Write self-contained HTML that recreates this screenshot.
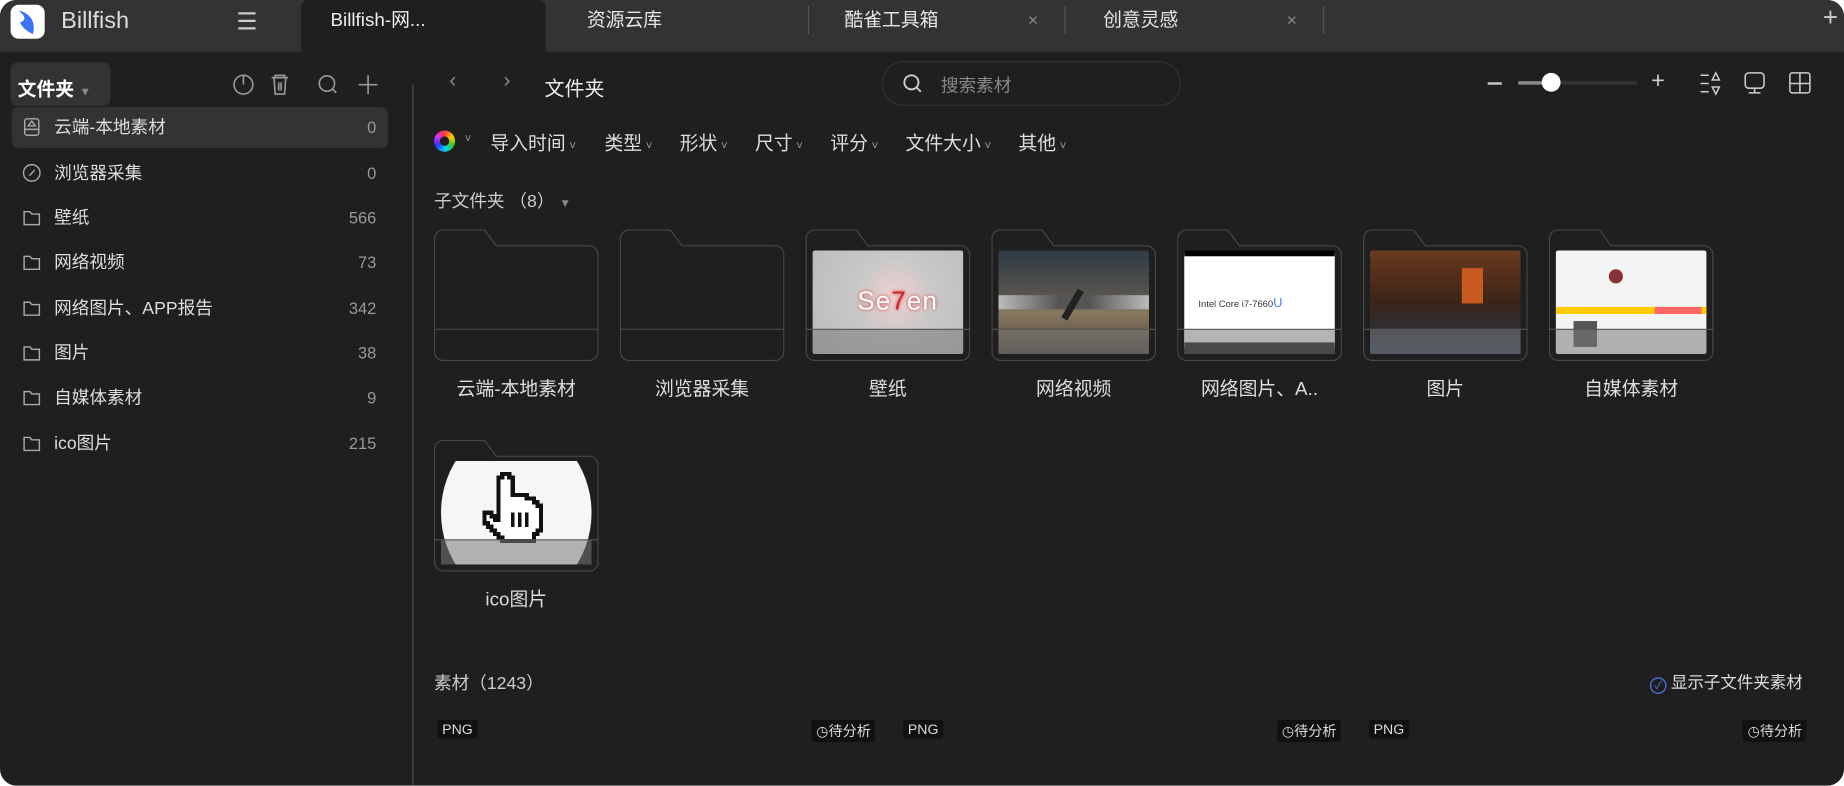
<!DOCTYPE html>
<html><head><meta charset="utf-8"><style>
html,body{margin:0;padding:0;background:#fff;overflow:hidden}
#w{position:absolute;left:0;top:0;width:1568px;height:668px;transform:scale(1.17602);transform-origin:0 0;font-family:"Liberation Sans","Noto Sans CJK SC",sans-serif;color:#ddd}
#win{position:absolute;left:0;top:0;width:1568px;height:668px;background:#1f1f1f;border-radius:14px;overflow:hidden}
#tb{position:absolute;left:0;top:0;width:1568px;height:44px;background:#333}
.a{position:absolute;white-space:nowrap}
.tab{position:absolute;top:0;height:44px;font-size:16px;line-height:36px;color:#e6e6e6}
.sep{position:absolute;top:5px;width:1px;height:24px;background:#555}
.x{position:absolute;top:9px;font-size:15px;color:#888}
.si{position:absolute;left:10px;width:320px;height:35px;font-size:15px;line-height:35px;color:#ddd}
.si .n{position:absolute;right:10px;color:#999;font-size:14px}
.si .t{position:absolute;left:36px}
.ic{position:absolute;left:9px;top:9px;width:16px;height:16px}
.f{position:absolute;width:140px;height:112px}
.f .img{position:absolute;left:6px;top:18px;width:128px;height:88px;overflow:hidden;border-radius:2px}
.f .sh{position:absolute;left:6px;top:85px;width:128px;height:21px;background:rgba(120,120,120,.55)}
.f svg{position:absolute;left:0;top:0}
.lb{position:absolute;width:158px;text-align:center;font-size:16px;color:#ddd}
.flt{position:absolute;top:108px;font-size:16px;color:#ddd}
.flt i{font-style:normal;font-size:10px;color:#999;margin-left:3px}
.tag{position:absolute;top:612px;background:#111;font-size:12px;color:#ddd;padding:1px 4px;border-radius:2px}
</style></head><body><div id="w"><div id="win">
<div id="tb"></div>
<div class="a" style="left:256px;top:0;width:208px;height:44px;background:#1f1f1f;border-radius:6px 6px 0 0"></div>
<div class="a" style="left:0;top:0;width:255px;height:44px;background:#333"></div>
<div class="a" style="left:9px;top:4px;width:29px;height:29px;background:#fff;border-radius:7px"><svg width="29" height="29" viewBox="0 0 29 29"><path d="M7 5 C16 7 22 14 19 25 C15 23 10 20 8 15 C12 14 13 11 10 8 Z" fill="#3a74f2"/></svg></div>
<div class="a" style="left:52px;top:7px;font-size:20px;color:#ddd">Billfish</div>
<div class="a" style="left:201px;top:6px;font-size:20px;color:#ccc">☰</div>
<div class="tab" style="left:281px;color:#eee">Billfish-网...</div>
<div class="tab" style="left:499px">资源云库</div>
<div class="sep" style="left:687px"></div>
<div class="tab" style="left:718px">酷雀工具箱</div><div class="x" style="left:874px">×</div>
<div class="sep" style="left:905px"></div>
<div class="tab" style="left:938px">创意灵感</div><div class="x" style="left:1094px">×</div>
<div class="sep" style="left:1125px"></div>
<div class="a" style="left:1550px;top:2px;font-size:22px;color:#ccc">+</div>

<!-- sidebar -->
<div class="a" style="left:9px;top:53px;width:85px;height:37px;background:#333;border-radius:6px"></div>
<div class="a" style="left:15px;top:62px;font-size:16px;font-weight:bold;color:#fff">文件夹 <span style="font-size:10px;color:#888">▼</span></div>
<svg class="a" style="left:196px;top:61px" width="130" height="22" viewBox="0 0 130 22" fill="none" stroke="#999" stroke-width="1.4"><circle cx="11" cy="11" r="8"/><path d="M11 3v8"/><path d="M35 5h14M38 5v-2h8v2M37 5l1 14h8l1-14M41 9v7M43 9v7"/><circle cx="82" cy="10" r="6.5"/><path d="M87 15l3 3"/><path d="M117 3v16M109 11h16"/></svg>
<div class="a" style="left:350px;top:72px;width:1.5px;height:596px;background:#3a3a3a"></div>
<div class="si" style="top:91px;background:#333;border-radius:6px"><svg class="ic" viewBox="0 0 16 16" fill="none" stroke="#aaa" stroke-width="1.2"><rect x="2" y="1" width="12" height="14" rx="2"/><path d="M2 10h12M5 7l3-4 3 4z"/></svg><span class="t">云端-本地素材</span><span class="n">0</span></div>
<div class="si" style="top:130px"><svg class="ic" viewBox="0 0 16 16" fill="none" stroke="#aaa" stroke-width="1.2"><circle cx="8" cy="8" r="7"/><path d="M10.5 5.5L6 10.5"/></svg><span class="t">浏览器采集</span><span class="n">0</span></div>
<div class="si" style="top:168px"><svg class="ic" viewBox="0 0 16 16" fill="none" stroke="#aaa" stroke-width="1.2"><path d="M1.5 3h5l1.5 2h6.5v9h-13z"/></svg><span class="t">壁纸</span><span class="n">566</span></div>
<div class="si" style="top:206px"><svg class="ic" viewBox="0 0 16 16" fill="none" stroke="#aaa" stroke-width="1.2"><path d="M1.5 3h5l1.5 2h6.5v9h-13z"/></svg><span class="t">网络视频</span><span class="n">73</span></div>
<div class="si" style="top:245px"><svg class="ic" viewBox="0 0 16 16" fill="none" stroke="#aaa" stroke-width="1.2"><path d="M1.5 3h5l1.5 2h6.5v9h-13z"/></svg><span class="t">网络图片、APP报告</span><span class="n">342</span></div>
<div class="si" style="top:283px"><svg class="ic" viewBox="0 0 16 16" fill="none" stroke="#aaa" stroke-width="1.2"><path d="M1.5 3h5l1.5 2h6.5v9h-13z"/></svg><span class="t">图片</span><span class="n">38</span></div>
<div class="si" style="top:321px"><svg class="ic" viewBox="0 0 16 16" fill="none" stroke="#aaa" stroke-width="1.2"><path d="M1.5 3h5l1.5 2h6.5v9h-13z"/></svg><span class="t">自媒体素材</span><span class="n">9</span></div>
<div class="si" style="top:360px"><svg class="ic" viewBox="0 0 16 16" fill="none" stroke="#aaa" stroke-width="1.2"><path d="M1.5 3h5l1.5 2h6.5v9h-13z"/></svg><span class="t">ico图片</span><span class="n">215</span></div>

<!-- header -->
<div class="a" style="left:382px;top:58px;font-size:18px;color:#888">‹</div>
<div class="a" style="left:428px;top:58px;font-size:18px;color:#888">›</div>
<div class="a" style="left:463px;top:61px;font-size:17px;color:#eee">文件夹</div>
<div class="a" style="left:750px;top:52px;width:252px;height:36px;border:1.5px solid #333;border-radius:18px;background:#1f1f1f"></div>
<svg class="a" style="left:767px;top:62px" width="18" height="18" fill="none" stroke="#ccc" stroke-width="1.6"><circle cx="8" cy="8" r="6"/><path d="M12.5 12.5l3.5 3.5"/></svg>
<div class="a" style="left:800px;top:62px;font-size:15px;color:#888">搜索素材</div>
<div class="a" style="left:1265px;top:70px;width:12px;height:2px;background:#ccc"></div>
<div class="a" style="left:1291px;top:69px;width:101px;height:3px;background:#333"></div>
<div class="a" style="left:1291px;top:69px;width:28px;height:3px;background:#888"></div>
<div class="a" style="left:1311px;top:62px;width:16px;height:16px;background:#fff;border-radius:8px"></div>
<div class="a" style="left:1404px;top:58px;font-size:20px;color:#ccc">+</div>
<svg class="a" style="left:1445px;top:60px" width="100" height="22" fill="none" stroke="#ccc" stroke-width="1.3"><path d="M1 4h7M1 11h7M1 18h7M14 2l-3 6h6zM14 20l-3-6h6z"/><rect x="39" y="2" width="16" height="13" rx="3"/><path d="M47 15v4M42 19h10"/><rect x="77" y="2" width="17" height="17" rx="2"/><path d="M85.5 2v17M77 11h17"/></svg>

<!-- filters -->
<div class="a" style="left:369px;top:111px;width:18px;height:18px;border-radius:9px;background:conic-gradient(#f33,#fc0,#3c3,#0cf,#33f,#c3f,#f33)"></div>
<div class="a" style="left:374px;top:116px;width:8px;height:8px;border-radius:4px;background:#1f1f1f"></div>
<div class="flt" style="left:392px"><i>˅</i></div>
<div class="flt" style="left:417px">导入时间<i>˅</i></div>
<div class="flt" style="left:514px">类型<i>˅</i></div>
<div class="flt" style="left:578px">形状<i>˅</i></div>
<div class="flt" style="left:642px">尺寸<i>˅</i></div>
<div class="flt" style="left:706px">评分<i>˅</i></div>
<div class="flt" style="left:770px">文件大小<i>˅</i></div>
<div class="flt" style="left:866px">其他<i>˅</i></div>
<div class="a" style="left:369px;top:160px;font-size:15px;color:#ccc">子文件夹 （8） <span style="font-size:10px;color:#888">▼</span></div>

<!-- folders row 1 -->
<div class="f" style="left:369px;top:195px"><svg width="140" height="112"><path d="M8 .5H43L53 14H132A7.5 7.5 0 0 1 139.5 21.5V104A7.5 7.5 0 0 1 132 111.5H8A7.5 7.5 0 0 1 .5 104V8A7.5 7.5 0 0 1 8 .5Z" fill="none" stroke="#484848"/><path d="M0 85H140" stroke="#484848"/></svg></div>
<div class="f" style="left:527px;top:195px"><svg width="140" height="112"><path d="M8 .5H43L53 14H132A7.5 7.5 0 0 1 139.5 21.5V104A7.5 7.5 0 0 1 132 111.5H8A7.5 7.5 0 0 1 .5 104V8A7.5 7.5 0 0 1 8 .5Z" fill="none" stroke="#484848"/><path d="M0 85H140" stroke="#484848"/></svg></div>
<div class="f" style="left:685px;top:195px"><svg width="140" height="112"><path d="M8 .5H43L53 14H132A7.5 7.5 0 0 1 139.5 21.5V104A7.5 7.5 0 0 1 132 111.5H8A7.5 7.5 0 0 1 .5 104V8A7.5 7.5 0 0 1 8 .5Z" fill="none" stroke="#484848"/></svg><div class="img" style="background:radial-gradient(circle at 55% 45%,#f0d0d0,#c8c8c8 40%,#bbb);"><div style="position:absolute;left:38px;top:30px;font-size:22px;color:#fff;letter-spacing:1px;text-shadow:0 0 3px #c33">Se<span style="color:#c22">7</span>en</div></div><div class="sh"></div><svg width="140" height="112"><path d="M0 85H140" stroke="#555"/></svg></div>
<div class="f" style="left:843px;top:195px"><svg width="140" height="112"><path d="M8 .5H43L53 14H132A7.5 7.5 0 0 1 139.5 21.5V104A7.5 7.5 0 0 1 132 111.5H8A7.5 7.5 0 0 1 .5 104V8A7.5 7.5 0 0 1 8 .5Z" fill="none" stroke="#484848"/></svg><div class="img" style="background:linear-gradient(#2e3a44,#5a5650 45%,#8a7a62 60%,#4a4238)"><div style="position:absolute;left:0;top:38px;width:128px;height:12px;background:linear-gradient(90deg,#bbb,#555 40%,#555 60%,#bbb)"></div><div style="position:absolute;left:60px;top:32px;width:6px;height:28px;background:#222;transform:rotate(30deg)"></div></div><div class="sh"></div><svg width="140" height="112"><path d="M0 85H140" stroke="#555"/></svg></div>
<div class="f" style="left:1001px;top:195px"><svg width="140" height="112"><path d="M8 .5H43L53 14H132A7.5 7.5 0 0 1 139.5 21.5V104A7.5 7.5 0 0 1 132 111.5H8A7.5 7.5 0 0 1 .5 104V8A7.5 7.5 0 0 1 8 .5Z" fill="none" stroke="#484848"/></svg><div class="img" style="background:#fff;border-top:5px solid #000;border-bottom:10px solid #111;box-sizing:border-box"><div style="position:absolute;left:12px;top:34px;font-size:8px;color:#333">Intel Core i7-7660<span style="color:#48f;font-size:11px">U</span></div></div><div class="sh"></div><svg width="140" height="112"><path d="M0 85H140" stroke="#555"/></svg></div>
<div class="f" style="left:1159px;top:195px"><svg width="140" height="112"><path d="M8 .5H43L53 14H132A7.5 7.5 0 0 1 139.5 21.5V104A7.5 7.5 0 0 1 132 111.5H8A7.5 7.5 0 0 1 .5 104V8A7.5 7.5 0 0 1 8 .5Z" fill="none" stroke="#484848"/></svg><div class="img" style="background:linear-gradient(#6a3a20,#3a2418 50%,#2a3a50)"><div style="position:absolute;left:78px;top:15px;width:18px;height:30px;background:#c85a20"></div></div><div class="sh"></div><svg width="140" height="112"><path d="M0 85H140" stroke="#555"/></svg></div>
<div class="f" style="left:1317px;top:195px"><svg width="140" height="112"><path d="M8 .5H43L53 14H132A7.5 7.5 0 0 1 139.5 21.5V104A7.5 7.5 0 0 1 132 111.5H8A7.5 7.5 0 0 1 .5 104V8A7.5 7.5 0 0 1 8 .5Z" fill="none" stroke="#484848"/></svg><div class="img" style="background:#f4f4f4"><div style="position:absolute;left:0;top:48px;width:128px;height:6px;background:#fc0"></div><div style="position:absolute;left:84px;top:48px;width:40px;height:6px;background:#f66"></div><div style="position:absolute;left:15px;top:60px;width:20px;height:22px;background:#555"></div><div style="position:absolute;left:45px;top:16px;width:12px;height:12px;border-radius:6px;background:#833"></div></div><div class="sh"></div><svg width="140" height="112"><path d="M0 85H140" stroke="#555"/></svg></div>
<div class="lb" style="left:360px;top:317px">云端-本地素材</div>
<div class="lb" style="left:518px;top:317px">浏览器采集</div>
<div class="lb" style="left:676px;top:317px">壁纸</div>
<div class="lb" style="left:834px;top:317px">网络视频</div>
<div class="lb" style="left:992px;top:317px">网络图片、A..</div>
<div class="lb" style="left:1150px;top:317px">图片</div>
<div class="lb" style="left:1308px;top:317px">自媒体素材</div>

<!-- row 2 -->
<div class="f" style="left:369px;top:374px"><svg width="140" height="112"><path d="M8 .5H43L53 14H132A7.5 7.5 0 0 1 139.5 21.5V104A7.5 7.5 0 0 1 132 111.5H8A7.5 7.5 0 0 1 .5 104V8A7.5 7.5 0 0 1 8 .5Z" fill="none" stroke="#484848"/></svg><div class="img" style="background:#1f1f1f"><div style="position:absolute;left:0;top:-30px;width:128px;height:148px;border-radius:50%;background:#f6f6f6"></div><svg style="position:absolute;left:28px;top:8px" width="72" height="72" viewBox="0 0 24 24" shape-rendering="crispEdges"><path d="M8 1h2v1h1v5h4v1h2v1h1v1h1v7h-1v1h-1v2h-9v-1h-1v-1h-1v-1h-1v-1h-1v-1h-1v-3h2v1h1v1h1v-12h1z" fill="#fff" stroke="#111" stroke-width="1.2"/><path d="M11 12v4M13 12v4M15 12v4" stroke="#111" stroke-width="1"/></svg></div><div class="sh"></div><svg width="140" height="112"><path d="M0 85H140" stroke="#555"/></svg></div>
<div class="lb" style="left:360px;top:496px">ico图片</div>

<!-- materials -->
<div class="a" style="left:369px;top:570px;font-size:15px;color:#ccc">素材（1243）</div>
<div class="a" style="left:1403px;top:570px;font-size:14px;color:#ddd"><span style="display:inline-block;width:12px;height:12px;border:1.5px solid #4a7af0;border-radius:8px;font-size:9px;line-height:12px;text-align:center;color:#4a7af0;vertical-align:-1px">✓</span> 显示子文件夹素材</div>
<div class="tag" style="left:372px">PNG</div><div class="tag" style="left:690px">◷待分析</div>
<div class="tag" style="left:768px">PNG</div><div class="tag" style="left:1086px">◷待分析</div>
<div class="tag" style="left:1164px">PNG</div><div class="tag" style="left:1482px">◷待分析</div>
</div></div></body></html>
